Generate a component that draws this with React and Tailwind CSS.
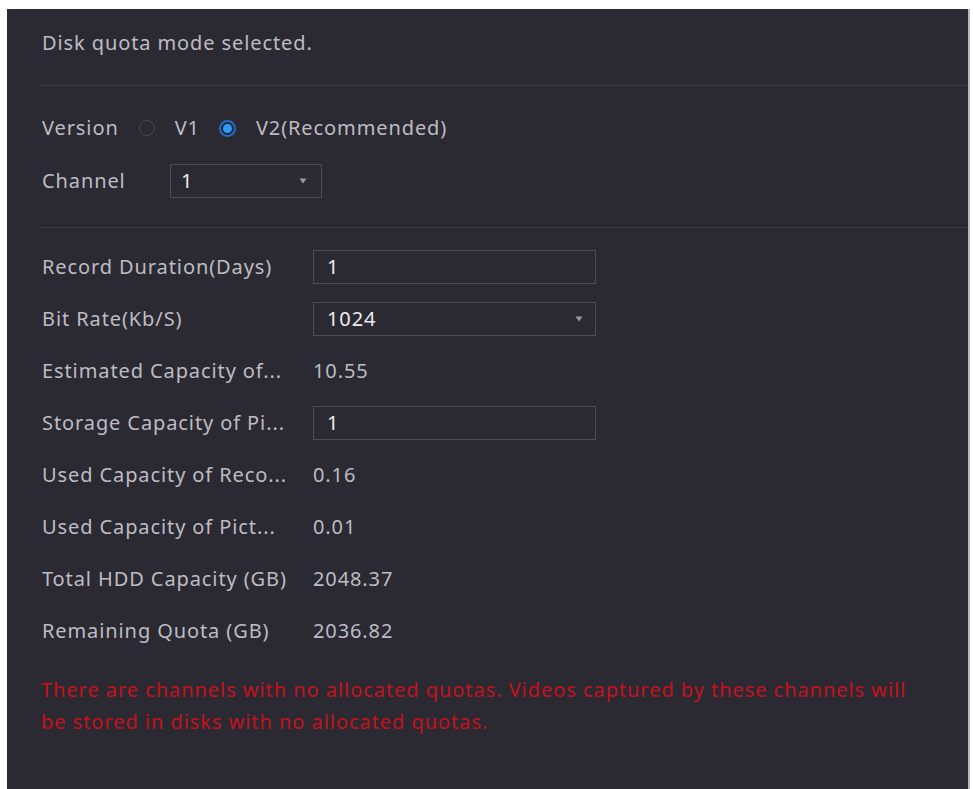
const rows = [
  { label: "Record Duration(Days)", kind: "input", value: "1" },
  { label: "Bit Rate(Kb/S)", kind: "select", value: "1024" },
  { label: "Estimated Capacity of...", kind: "text", value: "10.55" },
  { label: "Storage Capacity of Pi...", kind: "input", value: "1" },
  { label: "Used Capacity of Reco...", kind: "text", value: "0.16" },
  { label: "Used Capacity of Pict...", kind: "text", value: "0.01" },
  { label: "Total HDD Capacity (GB)", kind: "text", value: "2048.37" },
  { label: "Remaining Quota (GB)", kind: "text", value: "2036.82" },
];

const Caret = () => (
  <svg width="8" height="6" viewBox="0 0 8 6" className="shrink-0">
    <path d="M0.5 0.5h7L4 5.5z" fill="#9a99a1" />
  </svg>
);

const Radio = ({ checked }) =>
  checked ? (
    <span className="flex h-[17px] w-[17px] items-center justify-center rounded-full border-2 border-[#1c6fd0] bg-[#23262f]">
      <span className="block h-[9px] w-[9px] rounded-full bg-[#2d9bf5]" />
    </span>
  ) : (
    <span className="block h-[16px] w-[16px] rounded-full border border-[#4b4a52]" />
  );

const Field = ({ kind, value }) => {
  if (kind === "text") {
    return <span className="text-[#bdbcc2]">{value}</span>;
  }
  return (
    <div className="flex h-[34px] w-[283px] items-center justify-between border border-[#4d4c55] bg-[#2b2a32] pl-[13px] pr-[12px]">
      <span className="text-[#ececee]">{value}</span>
      {kind === "select" && <Caret />}
    </div>
  );
};

export default function App() {
  return (
    <main className="min-h-screen bg-white pl-[7px] pt-[9px] font-['Noto_Sans',sans-serif]">
      <div className="flex min-h-[780px] w-[963px] flex-col border-r-2 border-[#b9b9bd] bg-[#2b2a33] pt-[22px] text-[20px] tracking-[0.9px] text-[#bdbcc2]">
        <p className="h-[24px] pl-[35px] leading-[24px]">Disk quota mode selected.</p>
        <div className="ml-[33px] mt-[30px] h-px bg-[#3a3942]" />

        <div className="mt-[25px] flex h-[34px] items-center pl-[35px]">
          <span>Version</span>
          <span className="ml-[20px]"><Radio /></span>
          <span className="ml-[20px]">V1</span>
          <span className="ml-[19px]"><Radio checked /></span>
          <span className="ml-[20px]">V2(Recommended)</span>
        </div>

        <div className="mt-[19px] flex h-[34px] items-center pl-[35px]">
          <span className="w-[128px]">Channel</span>
          <div className="flex h-[34px] w-[152px] items-center justify-between border border-[#4d4c55] pl-[10px] pr-[14px]">
            <span className="text-[#ececee]">1</span>
            <Caret />
          </div>
        </div>

        <div className="ml-[33px] mt-[29px] h-px bg-[#3a3942]" />

        <div className="mt-[22px] flex flex-col gap-[18px] pl-[35px]">
          {rows.map((r) => (
            <div key={r.label} className="flex h-[34px] items-center">
              <span className="w-[271px] shrink-0">{r.label}</span>
              <Field kind={r.kind} value={r.value} />
            </div>
          ))}
        </div>

        <p className="mt-[26px] pl-[34px] leading-[32px] tracking-[0.95px] text-[#c3121c]">
          There are channels with no allocated quotas. Videos captured by these channels will
          <br />
          be stored in disks with no allocated quotas.
        </p>
      </div>
    </main>
  );
}
